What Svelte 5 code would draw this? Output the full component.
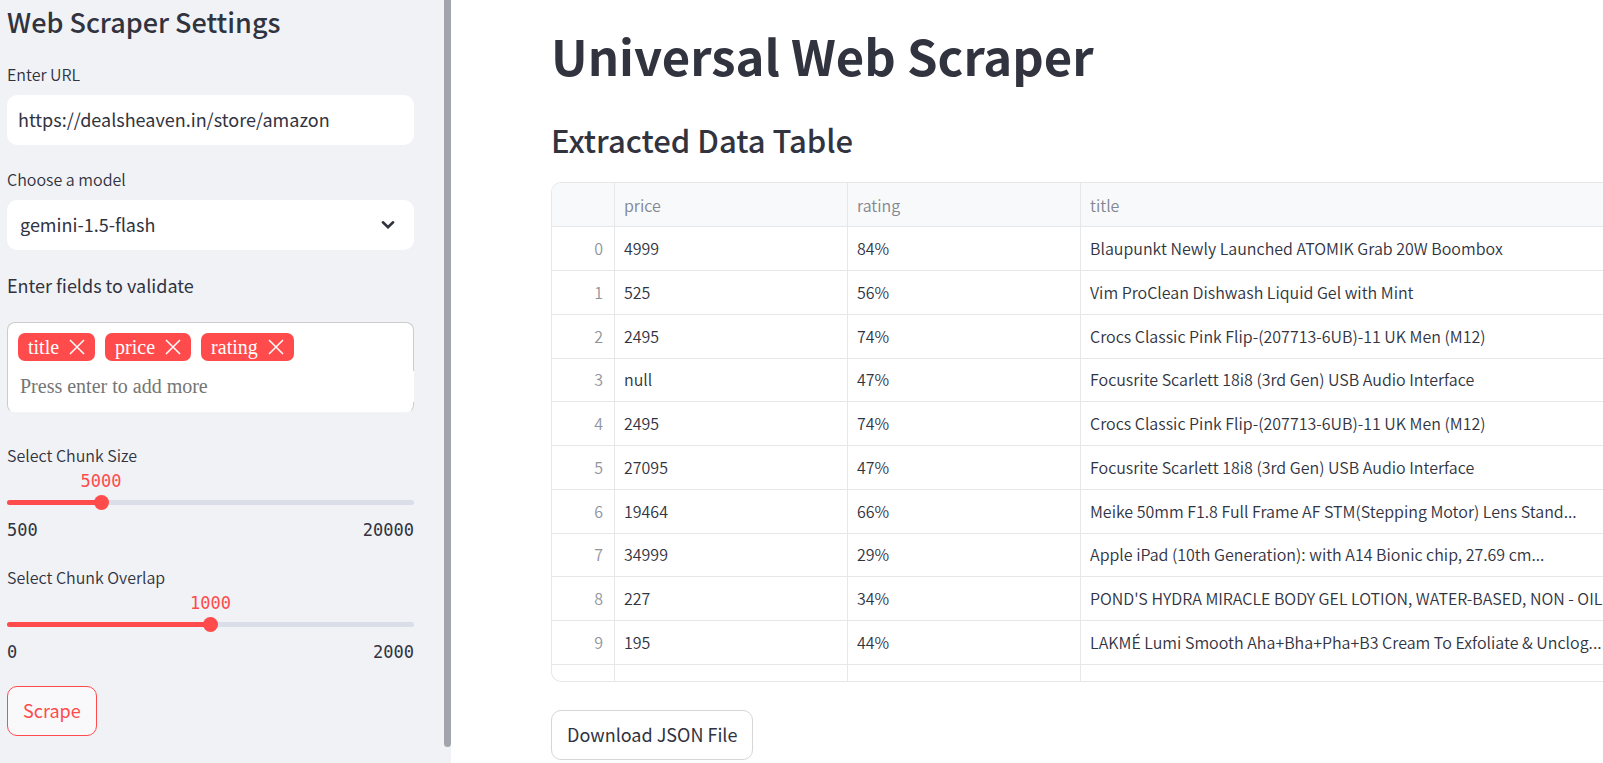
<script>
  let url = $state('https://dealsheaven.in/store/amazon');
  let model = $state('gemini-1.5-flash');
  let tags = $state(['title', 'price', 'rating']);
  let draft = $state('');
  let sliders = $state([
    { id: 'chunk-size', label: 'Select Chunk Size', min: 500, max: 20000, value: 5000 },
    { id: 'chunk-overlap', label: 'Select Chunk Overlap', min: 0, max: 2000, value: 1000 }
  ]);

  const rows = [
    ['4999', '84%', 'Blaupunkt Newly Launched ATOMIK Grab 20W Boombox'],
    ['525', '56%', 'Vim ProClean Dishwash Liquid Gel with Mint'],
    ['2495', '74%', 'Crocs Classic Pink Flip-(207713-6UB)-11 UK Men (M12)'],
    ['null', '47%', 'Focusrite Scarlett 18i8 (3rd Gen) USB Audio Interface'],
    ['2495', '74%', 'Crocs Classic Pink Flip-(207713-6UB)-11 UK Men (M12)'],
    ['27095', '47%', 'Focusrite Scarlett 18i8 (3rd Gen) USB Audio Interface'],
    ['19464', '66%', 'Meike 50mm F1.8 Full Frame AF STM(Stepping Motor) Lens Stand...'],
    ['34999', '29%', 'Apple iPad (10th Generation): with A14 Bionic chip, 27.69 cm...'],
    ['227', '34%', "POND'S HYDRA MIRACLE BODY GEL LOTION, WATER-BASED, NON - OIL..."],
    ['195', '44%', 'LAKMÉ Lumi Smooth Aha+Bha+Pha+B3 Cream To Exfoliate & Unclog...']
  ];

  const percent = (s) => ((s.value - s.min) / (s.max - s.min)) * 100;

  function addTag(event) {
    if (event.key === 'Enter' && draft.trim()) {
      tags.push(draft.trim());
      draft = '';
    }
  }
</script>

<div class="app">
  <aside class="sidebar">
    <div class="settings">
      <h2>Web Scraper Settings</h2>

      <label class="caption" for="url">Enter URL</label>
      <input id="url" class="field" type="text" bind:value={url} />

      <label class="caption" for="model">Choose a model</label>
      <div class="select">
        <select id="model" class="field" bind:value={model}>
          <option>gemini-1.5-flash</option>
        </select>
        <svg width="14" height="10" viewBox="0 0 14 10" aria-hidden="true">
          <path
            d="M1.9 2.3 L7 7.2 L12.1 2.3"
            fill="none"
            stroke="#31333f"
            stroke-width="2.6"
            stroke-linecap="round"
          />
        </svg>
      </div>

      <label class="prompt" for="fields">Enter fields to validate</label>
      <div class="tagbox">
        <div class="tags">
          {#each tags as tag, i}
            <span class="tag">
              {tag}
              <button type="button" aria-label="Remove {tag}" onclick={() => tags.splice(i, 1)}>
                <svg width="16" height="16" viewBox="0 0 16 16" aria-hidden="true">
                  <path d="M1 1 L15 15 M15 1 L1 15" fill="none" stroke="#fff" stroke-width="1.5" />
                </svg>
              </button>
            </span>
          {/each}
        </div>
        <input
          id="fields"
          type="text"
          placeholder="Press enter to add more"
          bind:value={draft}
          onkeydown={addTag}
        />
      </div>

      {#each sliders as s}
        <div class="slider">
          <label class="caption" for={s.id}>{s.label}</label>
          <div class="value"><output for={s.id} style="left: {percent(s)}%">{s.value}</output></div>
          <div class="rail">
            <div class="track"><div class="fill" style="width: {percent(s)}%"></div></div>
            <input id={s.id} type="range" min={s.min} max={s.max} bind:value={s.value} />
          </div>
          <div class="limits"><span>{s.min}</span><span>{s.max}</span></div>
        </div>
      {/each}

      <button type="button" class="button primary">Scrape</button>
    </div>
    <div class="scrollbar"></div>
  </aside>

  <main>
    <h1>Universal Web Scraper</h1>
    <h3>Extracted Data Table</h3>
    <div class="frame">
      <table>
        <thead>
          <tr>
            <th class="index"></th>
            <th class="narrow">price</th>
            <th class="narrow">rating</th>
            <th>title</th>
          </tr>
        </thead>
        <tbody>
          {#each rows as [price, rating, title], i}
            <tr>
              <td class="index">{i}</td>
              <td>{price}</td>
              <td>{rating}</td>
              <td>{title}</td>
            </tr>
          {/each}
          <tr><td></td><td></td><td></td><td></td></tr>
        </tbody>
      </table>
    </div>
    <button type="button" class="button">Download JSON File</button>
  </main>
</div>

<style>
  :global(body) {
    background: #fff;
  }

  .app,
  .app * {
    box-sizing: border-box;
  }

  .app {
    display: flex;
    min-height: 100vh;
    color: #31333f;
    font-family: 'Noto Sans CJK SC', 'Open Sans', sans-serif;
    font-size: 18px;
    overflow: hidden;
  }

  h1,
  h2,
  h3 {
    margin: 0;
  }

  button,
  input,
  select {
    margin: 0;
    font: inherit;
    color: inherit;
  }

  .sidebar {
    flex: 0 0 451px;
    display: flex;
    background: #f0f2f6;
  }

  .settings {
    flex: 1;
    min-width: 0;
    padding: 4px 30px 0 7px;
  }

  .scrollbar {
    width: 7px;
    margin-bottom: 16px;
    border-radius: 0 0 4px 4px;
    background: #a3a5ae;
  }

  h2 {
    margin-bottom: 21px;
    font-size: 27px;
    line-height: 36px;
    font-weight: 500;
  }

  .caption {
    display: block;
    margin-bottom: 8px;
    font-size: 16px;
    line-height: 26px;
    font-weight: 350;
  }

  .field {
    display: block;
    width: 100%;
    height: 50px;
    margin-bottom: 21px;
    padding: 0 11px 2px;
    border: 0;
    border-radius: 10px;
    background: #fff;
    outline: 0;
  }

  .select {
    position: relative;
  }

  .select .field {
    margin-bottom: 20px;
    padding: 0 13px 2px;
    appearance: none;
  }

  .select svg {
    position: absolute;
    right: 19px;
    top: 20px;
    pointer-events: none;
  }

  .prompt {
    display: block;
    margin-bottom: 22px;
    line-height: 30px;
  }

  .tagbox {
    margin-bottom: 29px;
    padding: 10px 0;
    border: 1px solid #ccc;
    border-bottom-color: #f4f5f7;
    border-radius: 8px;
    background: #fff;
    font-family: 'Liberation Serif', serif;
    font-size: 20px;
  }

  .tags {
    display: flex;
    gap: 10px;
    padding: 0 10px;
  }

  .tag {
    display: flex;
    align-items: center;
    gap: 10px;
    height: 28px;
    padding: 0 10px;
    border-radius: 7px;
    background: #ff4b4b;
    color: #fff;
  }

  .tag button {
    display: flex;
    padding: 0;
    border: 0;
    background: none;
  }

  .tagbox input {
    display: block;
    width: calc(100% + 1px);
    height: 31px;
    margin-top: 10px;
    padding: 0 12px;
    border: 0;
    background: #fff;
    outline: 0;
  }

  .tagbox input::placeholder {
    color: #757575;
  }

  .slider {
    margin-bottom: 24px;
  }

  .slider .caption {
    margin-bottom: 3px;
  }

  .value,
  .limits {
    height: 20px;
    font-family: 'DejaVu Sans Mono', monospace;
    font-size: 17px;
    line-height: 20px;
  }

  .value {
    position: relative;
    color: #ff4b4b;
  }

  .value output {
    position: absolute;
    transform: translateX(-50%);
  }

  .rail {
    display: grid;
    align-items: center;
    margin: 4px 0 10px;
  }

  .track,
  .rail input {
    grid-area: 1 / 1;
  }

  .track {
    height: 5px;
    border-radius: 3px;
    background: #dadee8;
    overflow: hidden;
  }

  .fill {
    height: 100%;
    background: #ff4b4b;
  }

  .rail input {
    height: 15px;
    margin: 0 -7px;
    background: none;
    appearance: none;
  }

  .rail input::-webkit-slider-thumb {
    width: 15px;
    height: 15px;
    border-radius: 50%;
    background: #ff4b4b;
    appearance: none;
  }

  .limits {
    display: flex;
    justify-content: space-between;
  }

  .button {
    height: 50px;
    padding: 0 15px 2px;
    border: 1px solid #d6d6d9;
    border-radius: 10px;
    background: #fff;
  }

  .primary {
    border-color: #ff4b4b;
    background: #f9f9fb;
    color: #ff4b4b;
  }

  main {
    flex: 1;
    min-width: 0;
    padding: 25px 0 0 100px;
  }

  h1 {
    margin-bottom: 35px;
    font-size: 49px;
    line-height: 60px;
    font-weight: 700;
    white-space: nowrap;
  }

  h3 {
    margin-bottom: 22px;
    font-size: 31px;
    line-height: 40px;
    font-weight: 500;
  }

  .frame {
    height: 500px;
    margin-bottom: 28px;
    border: 1px solid #e6e7e9;
    border-right: 0;
    border-radius: 10px 0 0 10px;
    overflow: hidden;
  }

  table {
    width: 100%;
    table-layout: fixed;
    border-collapse: separate;
    border-spacing: 0;
    font-size: 16px;
    line-height: 24px;
    font-weight: 350;
  }

  th,
  td {
    height: 44px;
    padding: 0 9px 2px;
    border-right: 1px solid #e6e7e9;
    border-bottom: 1px solid #e6e7e9;
    text-align: left;
    white-space: nowrap;
    overflow: hidden;
  }

  tbody tr:nth-child(4n) td {
    height: 43px;
  }

  th:last-child,
  td:last-child {
    padding-right: 0;
    border-right: 0;
  }

  th {
    padding-bottom: 0;
    background: #f8f9fb;
    color: #83858f;
    font-weight: 350;
  }

  th.narrow {
    width: 233px;
  }

  .index {
    width: 63px;
    padding-right: 11px;
    color: #92949c;
    text-align: right;
  }
</style>
